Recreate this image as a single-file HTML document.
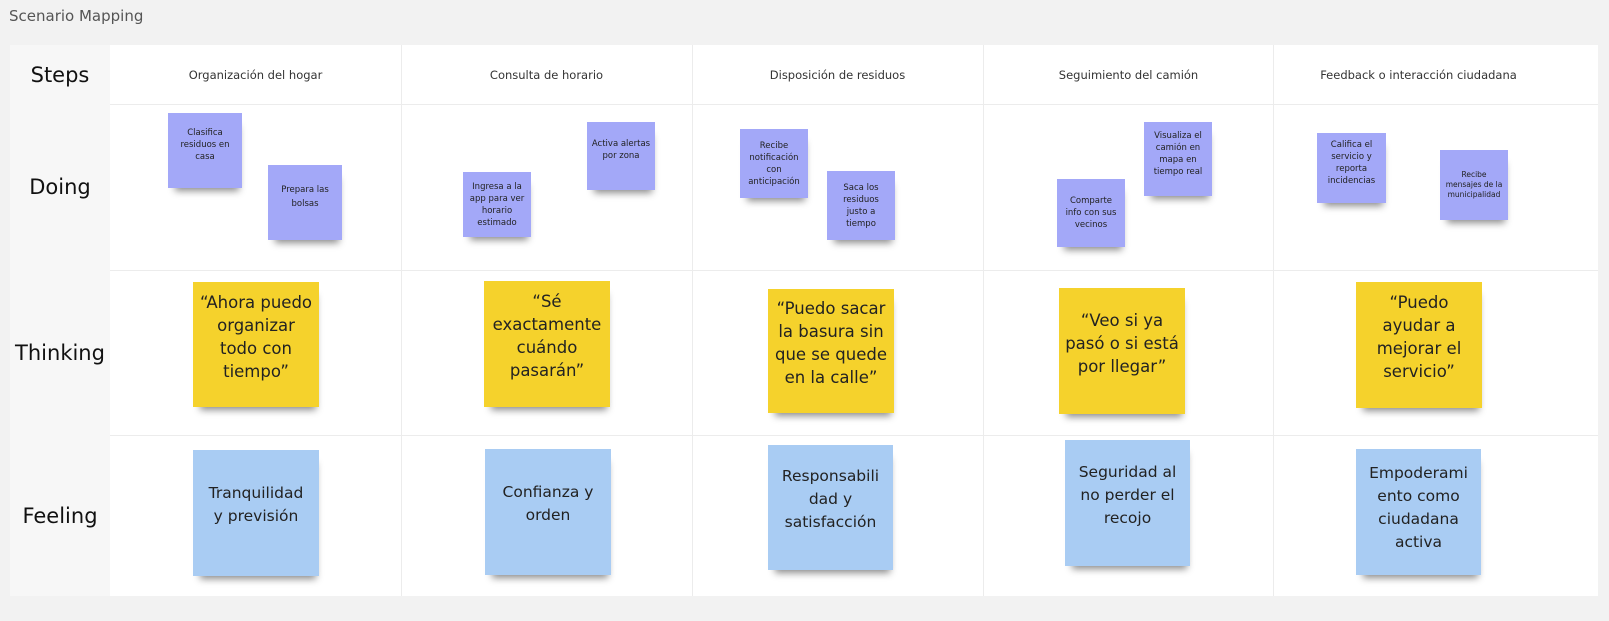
<!DOCTYPE html>
<html><head><meta charset="utf-8"><style>
*{margin:0;padding:0;box-sizing:border-box}
body{width:1609px;height:621px;background:#f2f2f2;font-family:"DejaVu Sans","Liberation Sans",sans-serif;position:relative;overflow:hidden;color:#1a1a1a}
.title{position:absolute;left:9px;top:7px;font-size:15px;color:#555}
.board{position:absolute;left:10px;top:45px;width:1588px;height:551px;background:#fff}
.lab{position:absolute;left:10px;width:100px;background:#f7f7f7;display:flex;align-items:center;justify-content:center;font-size:21px;color:#111}
.vl{position:absolute;top:45px;width:1px;height:551px;background:#ececec}
.hl{position:absolute;left:110px;width:1488px;height:1px;background:#ececec}
.hd{position:absolute;top:45px;height:59px;width:291px;display:flex;align-items:center;justify-content:center;font-size:11.5px;color:#333}
.s{position:absolute;display:flex;align-items:center;justify-content:center;text-align:center;white-space:nowrap;box-shadow:2px 8px 7px -5px rgba(0,0,0,.45)}
.p{background:#a3a8f8;font-size:8.5px;line-height:12px;color:#222;padding:2px}
.y{background:#f5d22c;font-size:16.5px;line-height:23px;color:#222;padding:0 0 16px}
.b{background:#a9ccf3;font-size:15.5px;line-height:23px;color:#222;padding:0 0 16px}
</style></head><body>
<div class="title">Scenario Mapping</div>
<div class="board"></div>
<div class="lab" style="top:45px;height:59px">Steps</div>
<div class="lab" style="top:104px;height:166px">Doing</div>
<div class="lab" style="top:270px;height:165px">Thinking</div>
<div class="lab" style="top:435px;height:161px">Feeling</div>
<div class="vl" style="left:401px"></div><div class="vl" style="left:692px"></div><div class="vl" style="left:983px"></div><div class="vl" style="left:1273px"></div>
<div class="hl" style="top:104px"></div><div class="hl" style="top:270px"></div><div class="hl" style="top:435px"></div>
<div class="hd" style="left:110px">Organización del hogar</div>
<div class="hd" style="left:401px">Consulta de horario</div>
<div class="hd" style="left:692px">Disposición de residuos</div>
<div class="hd" style="left:983px">Seguimiento del camión</div>
<div class="hd" style="left:1273px">Feedback o interacción ciudadana</div>

<div class="s p" style="left:168px;top:113px;width:74px;height:75px;padding-bottom:14px">Clasifica<br>residuos en<br>casa</div>
<div class="s p" style="left:268px;top:165px;width:74px;height:75px;padding-bottom:14px;line-height:14px">Prepara las<br>bolsas</div>
<div class="s p" style="left:463px;top:172px;width:68px;height:65px">Ingresa a la<br>app para ver<br>horario<br>estimado</div>
<div class="s p" style="left:587px;top:122px;width:68px;height:68px;padding-bottom:14px">Activa alertas<br>por zona</div>
<div class="s p" style="left:740px;top:129px;width:68px;height:69px">Recibe<br>notificación<br>con<br>anticipación</div>
<div class="s p" style="left:827px;top:171px;width:68px;height:69px">Saca los<br>residuos<br>justo a<br>tiempo</div>
<div class="s p" style="left:1057px;top:179px;width:68px;height:68px">Comparte<br>info con sus<br>vecinos</div>
<div class="s p" style="left:1144px;top:122px;width:68px;height:74px;padding-bottom:12px">Visualiza el<br>camión en<br>mapa en<br>tiempo real</div>
<div class="s p" style="left:1317px;top:133px;width:69px;height:70px;padding-bottom:12px">Califica el<br>servicio y<br>reporta<br>incidencias</div>
<div class="s p" style="left:1440px;top:150px;width:68px;height:70px;font-size:7.5px;line-height:10px">Recibe<br>mensajes de la<br>municipalidad</div>

<div class="s y" style="left:193px;top:282px;width:126px;height:125px">“Ahora puedo<br>organizar<br>todo con<br>tiempo”</div>
<div class="s y" style="left:484px;top:281px;width:126px;height:126px">“Sé<br>exactamente<br>cuándo<br>pasarán”</div>
<div class="s y" style="left:768px;top:289px;width:126px;height:124px">“Puedo sacar<br>la basura sin<br>que se quede<br>en la calle”</div>
<div class="s y" style="left:1059px;top:288px;width:126px;height:126px">“Veo si ya<br>pasó o si está<br>por llegar”</div>
<div class="s y" style="left:1356px;top:282px;width:126px;height:126px">“Puedo<br>ayudar a<br>mejorar el<br>servicio”</div>

<div class="s b" style="left:193px;top:450px;width:126px;height:126px">Tranquilidad<br>y previsión</div>
<div class="s b" style="left:485px;top:449px;width:126px;height:126px">Confianza y<br>orden</div>
<div class="s b" style="left:768px;top:445px;width:125px;height:125px">Responsabili<br>dad y<br>satisfacción</div>
<div class="s b" style="left:1065px;top:440px;width:125px;height:126px">Seguridad al<br>no perder el<br>recojo</div>
<div class="s b" style="left:1356px;top:449px;width:125px;height:126px;padding-bottom:8px">Empoderami<br>ento como<br>ciudadana<br>activa</div>
</body></html>
